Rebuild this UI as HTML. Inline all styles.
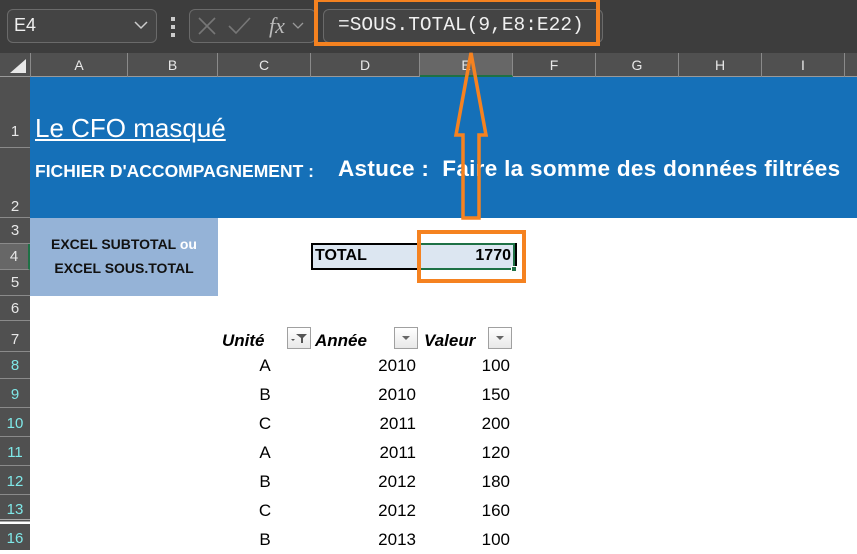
<!DOCTYPE html>
<html><head><meta charset="utf-8"><style>
*{margin:0;padding:0;box-sizing:border-box}
body{width:857px;height:550px;overflow:hidden;background:#fff;position:relative;font-family:"Liberation Sans",sans-serif}
.a{position:absolute}
.ch{position:absolute;top:53px;height:24px;color:#e8e8e8;font-size:14px;text-align:center;line-height:24px;border-right:1px solid #8a8a8a}
.rh{position:absolute;left:0;width:30px;background:#505050;color:#e8e8e8;font-size:15px;text-align:center;border-bottom:1px solid #8a8a8a}
.cy{color:#7fe8e8}
.t{position:absolute;font-size:17px;color:#000}
.btn{position:absolute;width:24px;height:22px;border:1px solid #a0a0a0;background:linear-gradient(#fff,#e8e8e8)}
</style></head><body>
<div class="a" style="left:0;top:0;width:857px;height:53px;background:#3d3d3d"></div>
<div class="a" style="left:7px;top:9px;width:150px;height:34px;border:1px solid #6a6a6a;border-radius:6px;background:#444"></div>
<div class="a" style="left:14px;top:15px;color:#f0f0f0;font-size:18px">E4</div>
<svg class="a" style="left:134px;top:20px" width="14" height="10"><path d="M1 2 L7 8 L13 2" stroke="#ccc" stroke-width="1.5" fill="none"/></svg>
<div class="a" style="left:171px;top:17px;width:4px;height:4px;background:#ccc"></div>
<div class="a" style="left:171px;top:25px;width:4px;height:4px;background:#ccc"></div>
<div class="a" style="left:171px;top:33px;width:4px;height:4px;background:#ccc"></div>
<div class="a" style="left:189px;top:9px;width:127px;height:34px;border:1px solid #6a6a6a;border-radius:6px;background:#444"></div>
<svg class="a" style="left:195px;top:14px" width="120" height="26"><path d="M4 4 L20 20 M20 4 L4 20" stroke="#777" stroke-width="1.6"/><path d="M34 12 L41 19 L55 4" stroke="#777" stroke-width="1.6" fill="none"/><text x="74" y="19" font-family="Liberation Serif" font-style="italic" font-size="22" fill="#bbb">fx</text><path d="M98 9 L103 14 L108 9" stroke="#999" stroke-width="1.3" fill="none"/></svg>
<div class="a" style="left:323px;top:9px;width:280px;height:34px;border:1px solid #6a6a6a;border-radius:6px;background:#444"></div>
<div class="a" style="left:338px;top:14px;color:#f0f0f0;font-size:19.5px;font-family:'Liberation Mono',monospace">=SOUS.TOTAL(9,E8:E22)</div>
<div class="a" style="left:314px;top:-2px;width:286px;height:48px;border:4px solid #f58220"></div>
<div class="a" style="left:0;top:53px;width:857px;height:24px;background:#505050;border-bottom:1px solid #999"></div>
<svg class="a" style="left:8px;top:57px" width="20" height="18"><path d="M18 2 L18 16 L2 16 Z" fill="#e8e8e8"/></svg>
<div class="ch" style="left:30px;width:98px;border-left:1px solid #8a8a8a">A</div>
<div class="ch" style="left:128px;width:90px">B</div>
<div class="ch" style="left:218px;width:93px">C</div>
<div class="ch" style="left:311px;width:109px">D</div>
<div class="ch" style="left:420px;width:93px;background:#676767;border-bottom:2px solid #1e7145">E</div>
<div class="ch" style="left:513px;width:83px">F</div>
<div class="ch" style="left:596px;width:83px">G</div>
<div class="ch" style="left:679px;width:83px">H</div>
<div class="ch" style="left:762px;width:83px">I</div>
<div class="rh" style="top:77px;height:71px;line-height:110px">1</div>
<div class="rh" style="top:148px;height:70px;line-height:118px">2</div>
<div class="rh" style="top:218px;height:26px;line-height:26px">3</div>
<div class="rh" style="top:244px;height:26px;line-height:26px;background:#676767;border-right:2px solid #1e7145">4</div>
<div class="rh" style="top:270px;height:26px;line-height:26px">5</div>
<div class="rh" style="top:296px;height:25px;line-height:25px">6</div>
<div class="rh" style="top:321px;height:31px;line-height:38px">7</div>
<div class="rh cy" style="top:352px;height:27px;line-height:28px">8</div>
<div class="rh cy" style="top:379px;height:29px;line-height:31px">9</div>
<div class="rh cy" style="top:408px;height:29px;line-height:31px">10</div>
<div class="rh cy" style="top:437px;height:29px;line-height:31px">11</div>
<div class="rh cy" style="top:466px;height:29px;line-height:31px">12</div>
<div class="rh cy" style="top:495px;height:27px;line-height:30px;border-bottom:3px double #aaa">13</div>
<div class="rh cy" style="top:524px;height:26px;line-height:30px;border-bottom:none">16</div>
<div class="a" style="left:30px;top:77px;width:827px;height:141px;background:#1570b8"></div>
<div class="a" style="left:35px;top:113px;color:#fff;font-size:26px;text-decoration:underline">Le CFO masqué</div>
<div class="a" style="left:35px;top:161px;color:#fff;font-size:17.5px;font-weight:bold;white-space:nowrap">FICHIER D'ACCOMPAGNEMENT :</div>
<div class="a" style="left:338px;top:156px;color:#fff;font-size:22.5px;font-weight:bold;white-space:pre;letter-spacing:0.3px">Astuce :  Faire la somme des données filtrées</div>
<div class="a" style="left:30px;top:218px;width:188px;height:78px;background:#95b3d7;font-size:14px;font-weight:bold;text-align:center;line-height:24px;padding-top:14px;color:#111">EXCEL SUBTOTAL <span style="color:#fff">ou</span><br>EXCEL SOUS.TOTAL</div>
<div class="a" style="left:311px;top:243px;width:206px;height:27px;background:#dce6f1;border:2px solid #000"></div>
<div class="a" style="left:419px;top:243px;width:96px;height:27px;border:2px solid #1e7145;border-left:none"></div>
<div class="a" style="left:511px;top:266px;width:6px;height:6px;background:#1e7145;border:1px solid #fff"></div>
<div class="t" style="left:315px;top:247px;font-weight:bold;font-size:16px">TOTAL</div>
<div class="t" style="left:440px;top:247px;width:71px;text-align:right;font-weight:bold;font-size:16px">1770</div>
<div class="a" style="left:417px;top:230px;width:109px;height:53px;border:4px solid #f58220"></div>
<svg class="a" style="left:450px;top:48px" width="45" height="175"><path d="M21 5 L36 87 L29 87 L29 170 L13 170 L13 87 L6 87 Z" fill="none" stroke="#f58220" stroke-width="3.5" stroke-linejoin="miter"/></svg>
<div class="t" style="left:222px;top:331px;font-weight:bold;font-style:italic">Unité</div>
<div class="btn" style="left:287px;top:327px"><svg width="22" height="20"><path d="M8 6 L19 6 L15 10 L15 15 L13 15 L13 10 Z" fill="#555"/><path d="M3 11 L7 11 L5 13 Z" fill="#555"/></svg></div>
<div class="t" style="left:315px;top:331px;font-weight:bold;font-style:italic">Année</div>
<div class="btn" style="left:394px;top:327px"><svg width="22" height="20"><path d="M7 8 L15 8 L11 12 Z" fill="#666"/></svg></div>
<div class="t" style="left:424px;top:331px;font-weight:bold;font-style:italic">Valeur</div>
<div class="btn" style="left:488px;top:327px"><svg width="22" height="20"><path d="M7 8 L15 8 L11 12 Z" fill="#666"/></svg></div>
<div class="t" style="left:250px;top:356px;width:30px;text-align:center">A</div><div class="t" style="left:336px;top:356px;width:80px;text-align:right">2010</div><div class="t" style="left:430px;top:356px;width:80px;text-align:right">100</div>
<div class="t" style="left:250px;top:385px;width:30px;text-align:center">B</div><div class="t" style="left:336px;top:385px;width:80px;text-align:right">2010</div><div class="t" style="left:430px;top:385px;width:80px;text-align:right">150</div>
<div class="t" style="left:250px;top:414px;width:30px;text-align:center">C</div><div class="t" style="left:336px;top:414px;width:80px;text-align:right">2011</div><div class="t" style="left:430px;top:414px;width:80px;text-align:right">200</div>
<div class="t" style="left:250px;top:443px;width:30px;text-align:center">A</div><div class="t" style="left:336px;top:443px;width:80px;text-align:right">2011</div><div class="t" style="left:430px;top:443px;width:80px;text-align:right">120</div>
<div class="t" style="left:250px;top:472px;width:30px;text-align:center">B</div><div class="t" style="left:336px;top:472px;width:80px;text-align:right">2012</div><div class="t" style="left:430px;top:472px;width:80px;text-align:right">180</div>
<div class="t" style="left:250px;top:501px;width:30px;text-align:center">C</div><div class="t" style="left:336px;top:501px;width:80px;text-align:right">2012</div><div class="t" style="left:430px;top:501px;width:80px;text-align:right">160</div>
<div class="t" style="left:250px;top:530px;width:30px;text-align:center">B</div><div class="t" style="left:336px;top:530px;width:80px;text-align:right">2013</div><div class="t" style="left:430px;top:530px;width:80px;text-align:right">100</div>
</body></html>
